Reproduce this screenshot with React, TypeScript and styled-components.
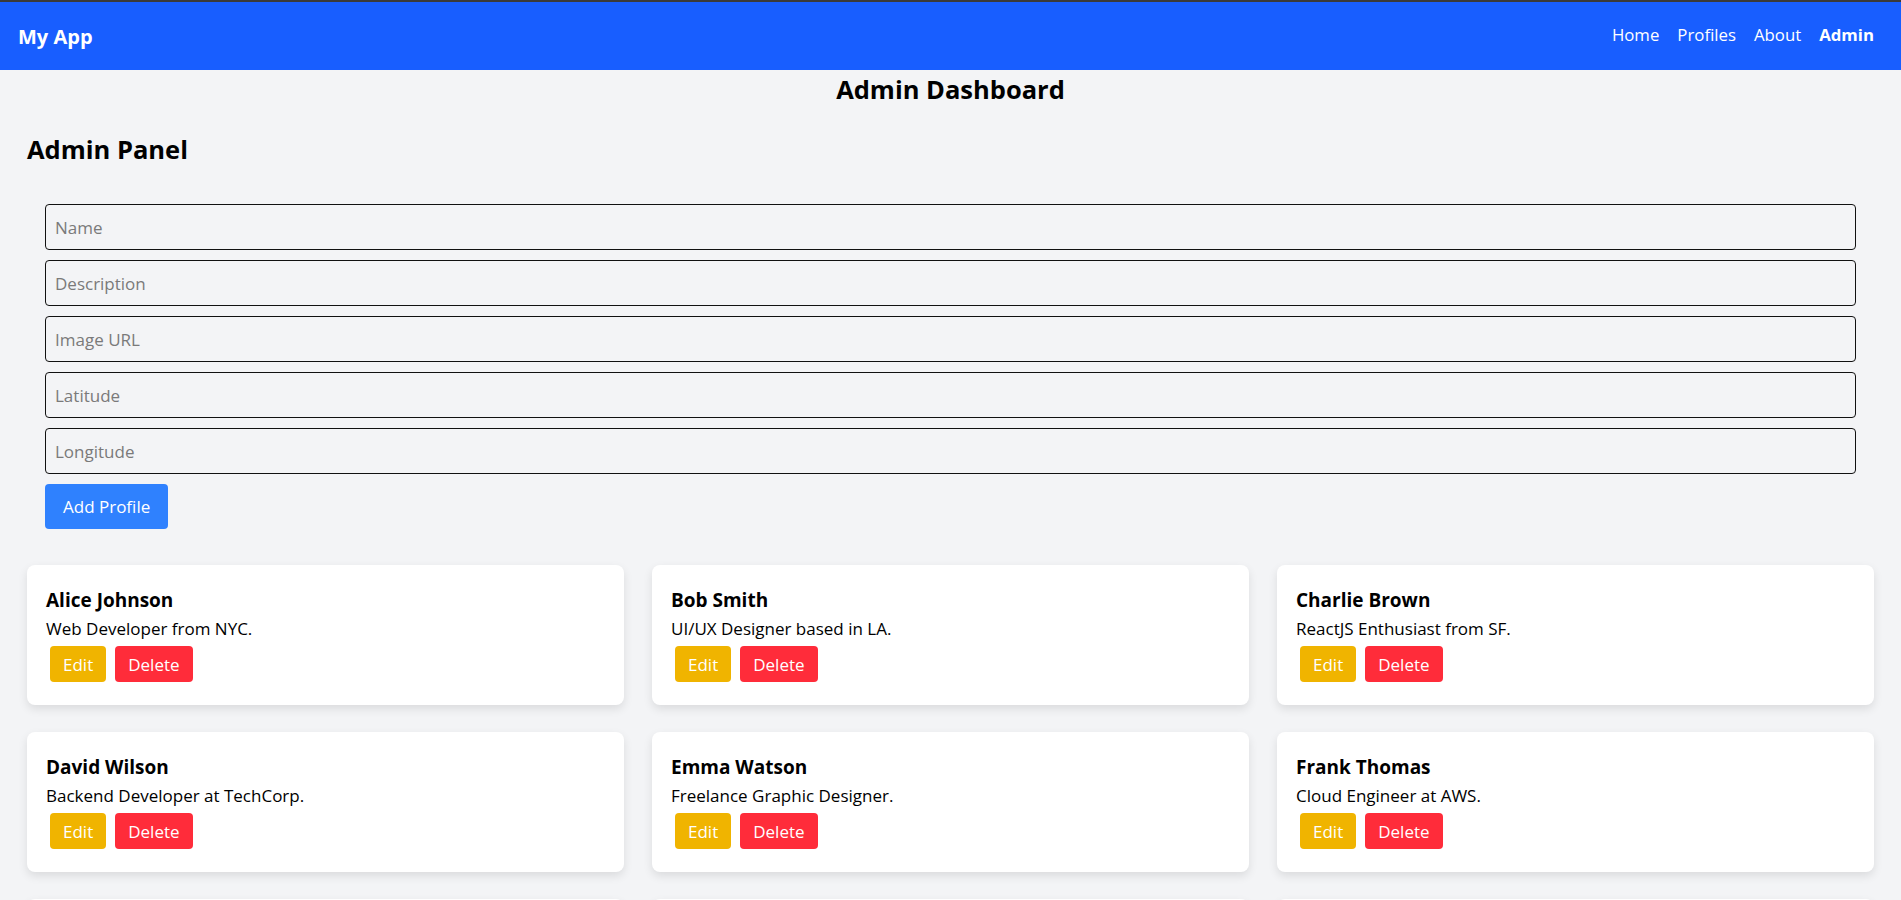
import React from "react";
import styled, { createGlobalStyle } from "styled-components";

const GlobalStyle = createGlobalStyle`
  * { box-sizing: border-box; }
  body {
    margin: 0;
    background: #f3f4f6;
    font-family: "Open Sans", "Noto Sans", Arial, sans-serif;
    color: #000;
  }
`;

const NavBar = styled.nav`
  display: flex;
  align-items: center;
  justify-content: space-between;
  height: 70px;
  border-top: 2px solid #3a3a3a;
  background: #185eff;
  padding: 0 27px 0 18px;
`;

const Brand = styled.div`
  color: #fff;
  font-size: 20px;
  font-weight: 700;
`;

const NavLinks = styled.div`
  display: flex;
  gap: 18px;
  margin-top: -4px;
`;

const NavLink = styled.a<{ $active?: boolean }>`
  color: #fff;
  font-size: 16.8px;
  font-weight: ${(p) => (p.$active ? 700 : 400)};
  text-decoration: none;
  cursor: pointer;
`;

const Main = styled.main`
  padding: 0 27px;
`;

const PageTitle = styled.h1`
  margin: 0;
  padding-top: 2px;
  text-align: center;
  font-size: 25.5px;
  font-weight: 700;
  line-height: 34px;
`;

const SectionTitle = styled.h2`
  margin: 26px 0 0;
  font-size: 25.5px;
  font-weight: 700;
  line-height: 34px;
`;

const Form = styled.form`
  display: flex;
  flex-direction: column;
  align-items: flex-start;
  gap: 10px;
  padding: 0 18px;
  margin-top: 38px;
`;

const Field = styled.input`
  width: 100%;
  height: 46px;
  padding: 0 9px;
  border: 1px solid #111;
  border-radius: 4px;
  background: transparent;
  font-family: inherit;
  font-size: 17px;
  color: #222;
  &::placeholder {
    color: #7a7a7a;
  }
`;

const PrimaryButton = styled.button`
  height: 45px;
  padding: 0 18px;
  border: none;
  border-radius: 4px;
  background: #2f81fe;
  color: #fff;
  font-family: inherit;
  font-size: 17px;
  cursor: pointer;
`;

const CardGrid = styled.div`
  display: grid;
  grid-template-columns: repeat(3, 1fr);
  column-gap: 28px;
  row-gap: 27px;
  margin-top: 36px;
`;

const Card = styled.div`
  background: #fff;
  border-radius: 8px;
  box-shadow: 0 4px 10px rgba(0, 0, 0, 0.1);
  padding: 21px 19px 18px;
  height: 140px;
`;

const CardName = styled.h3`
  margin: 0;
  font-size: 19px;
  font-weight: 700;
  line-height: 29px;
`;

const CardDesc = styled.p`
  margin: 0;
  font-size: 17px;
  line-height: 28px;
`;

const Actions = styled.div`
  display: flex;
  gap: 9px;
  padding-left: 4px;
  margin-top: 3px;
`;

const ActionButton = styled.button<{ $variant: "edit" | "delete" }>`
  height: 36px;
  padding: 0 13px;
  border: none;
  border-radius: 4px;
  background: ${(p) => (p.$variant === "edit" ? "#f0b400" : "#ff2c3a")};
  color: #fff;
  font-family: inherit;
  font-size: 17px;
  cursor: pointer;
`;

const profiles = [
  { name: "Alice Johnson", desc: "Web Developer from NYC." },
  { name: "Bob Smith", desc: "UI/UX Designer based in LA." },
  { name: "Charlie Brown", desc: "ReactJS Enthusiast from SF." },
  { name: "David Wilson", desc: "Backend Developer at TechCorp." },
  { name: "Emma Watson", desc: "Freelance Graphic Designer." },
  { name: "Frank Thomas", desc: "Cloud Engineer at AWS." },
  { name: "Grace Lee", desc: "Data Scientist in Boston." },
  { name: "Henry Clark", desc: "Mobile App Developer." },
  { name: "Isabel Martinez", desc: "Product Manager in Austin." },
];

export default function App() {
  return (
    <>
      <GlobalStyle />
      <NavBar>
        <Brand>My App</Brand>
        <NavLinks>
          <NavLink>Home</NavLink>
          <NavLink>Profiles</NavLink>
          <NavLink>About</NavLink>
          <NavLink $active>Admin</NavLink>
        </NavLinks>
      </NavBar>
      <Main>
        <PageTitle>Admin Dashboard</PageTitle>
        <SectionTitle>Admin Panel</SectionTitle>
        <Form onSubmit={(e) => e.preventDefault()}>
          <Field placeholder="Name" />
          <Field placeholder="Description" />
          <Field placeholder="Image URL" />
          <Field placeholder="Latitude" />
          <Field placeholder="Longitude" />
          <PrimaryButton type="submit">Add Profile</PrimaryButton>
        </Form>
        <CardGrid>
          {profiles.map((p) => (
            <Card key={p.name}>
              <CardName>{p.name}</CardName>
              <CardDesc>{p.desc}</CardDesc>
              <Actions>
                <ActionButton $variant="edit">Edit</ActionButton>
                <ActionButton $variant="delete">Delete</ActionButton>
              </Actions>
            </Card>
          ))}
        </CardGrid>
      </Main>
    </>
  );
}
